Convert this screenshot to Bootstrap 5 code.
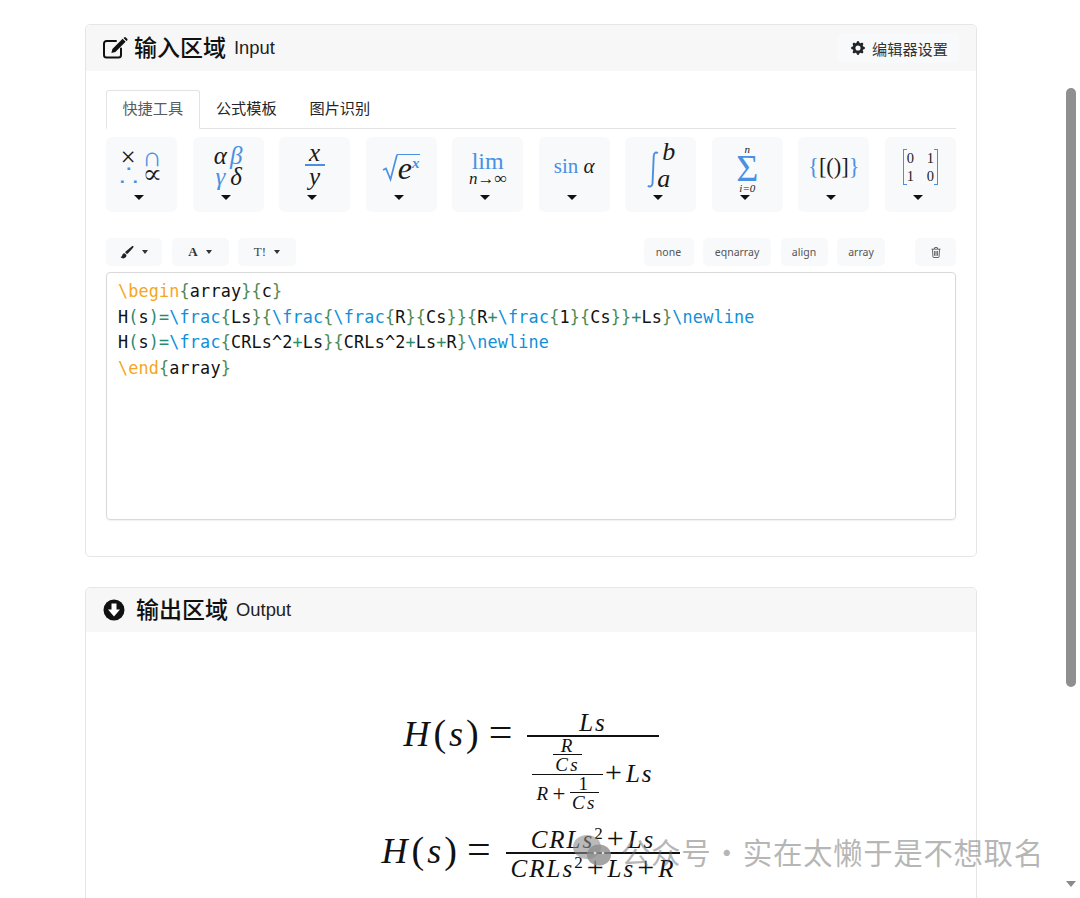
<!DOCTYPE html>
<html lang="zh">
<head>
<meta charset="utf-8">
<title>输入区域</title>
<link href="https://cdn.jsdelivr.net/npm/bootstrap@5.3.0/dist/css/bootstrap.min.css" rel="stylesheet">
<style>
html,body{height:898px;overflow:hidden;background:#fff}
body{font-family:"Liberation Sans","Noto Sans CJK SC",sans-serif;color:#212529}
.shell{height:898px;overflow:hidden}
.page-col{padding:24px 88px 0 85px;min-width:0}
.scroll-col{width:15px;flex:none;background:#fff}
.scroll-thumb{width:10px;height:599px;margin:88px 0 0 1px;background:#8f8f8f;border-radius:5px}
.scroll-arrow{width:0;height:0;border:5px solid transparent;border-top:6px solid #8a8a8a;margin:194px 0 0 1px}
.pane{--bs-card-border-color:#e6e6e6;--bs-card-inner-border-radius:4px;border-radius:5px}
.pane + .pane{margin-top:30px}
.pane-head{height:46px;padding:0 17px;background:#f7f7f7;border:0}
.pane-head-b{height:44px}
.pane-title{font-size:23px;font-weight:500;color:#111;font-family:"Noto Sans CJK SC",sans-serif;line-height:1}
.cn-lift{padding-bottom:4px}
.ic-a{margin-right:-2px}
.ic-b{margin-right:3px}
.gap-8{gap:8px}
.pane-en{font-size:18.4px;font-weight:400;font-family:"Liberation Sans",sans-serif;color:#222}
.set-btn{height:30px;width:122px;padding:0 0 0 3px;gap:7px;font-size:15.2px;color:#333;background:#f8f9fa;border:0;border-radius:5px;font-family:"Noto Sans CJK SC",sans-serif}
.input-body{padding:19px 20px 36px 20px}
.tabs-row{--bs-nav-tabs-border-color:#e3e3e3;--bs-nav-tabs-link-active-border-color:#e3e3e3 #e3e3e3 #fff;--bs-nav-tabs-border-radius:3px;margin-bottom:8px}
.tabs-row .nav-link{font-size:15.2px;padding:5px 15.4px 10px;color:#212529;font-family:"Noto Sans CJK SC",sans-serif;line-height:22px}
.tabs-row .nav-link.active{color:#555c63}
.tool-cell{width:71px;height:75px;padding:0;background:#f7f9fb;border-radius:6px;border:0;color:#1b1b1b;font-family:"Liberation Serif",serif}
.tool-art{height:58px;line-height:1}
.tri{display:block;width:0;height:0;border:5px solid transparent;border-top:5.5px solid #111;border-bottom:0;margin-right:5px}
.blu{color:#4a90e2}
.it{font-style:italic}
.g22{display:grid;grid-template-columns:auto auto;column-gap:0;justify-content:center;font-size:27px;line-height:17px;padding-top:12px}
.g22i{display:grid;grid-template-columns:auto auto;column-gap:3px;justify-content:center;font-size:25px;line-height:21px;font-style:italic;padding-top:8px}
.tfrac{font-size:25px;font-style:italic;line-height:20px;padding-top:6px}
.tfrac-bar{display:block;width:20px;height:2px;background:#4a90e2;margin:1px auto}
.sq-art{padding-top:17px}
.sq-x{font-size:32px;font-style:italic;line-height:27px;display:block}
.sq-sup{font-size:15px;font-style:italic;font-weight:700;vertical-align:11px;line-height:0;color:#4a90e2}
.sq-top{border-top:1.5px solid #4a90e2;padding:0 1px;margin-left:-1px}
.lim-a{font-size:24px;line-height:21px}
.lim-b{font-size:17px;line-height:14px;font-style:italic}
.lim-art{padding-top:14px}
.sin-a{font-size:21px;line-height:59px}
.int-sign{margin-top:14px}
.int-l{font-size:26px;line-height:27px;font-style:italic;text-align:left;padding-top:1px}
.int-b{margin-left:2px}
.int-a{margin-left:-3px}
.sum-art{padding-top:7px}
.sum-s{font-size:11px;line-height:10px;font-style:italic}
.sum-m{font-size:38px;line-height:29px}
.brk{font-size:22.5px;line-height:59px}
.mtx-art{padding-top:12px}
.mtx{display:grid;grid-template-columns:11px 11px;column-gap:9px;border-left:1.5px solid #4a90e2;border-right:1.5px solid #4a90e2;padding:0 1px;font-size:14.5px;line-height:18px;position:relative}
.mtx::before,.mtx::after{content:"";position:absolute;width:3px;top:0;bottom:0;border-top:1.5px solid #4a90e2;border-bottom:1.5px solid #4a90e2}
.mtx::before{left:0}.mtx::after{right:0}
.bar-btn{height:28px;padding:0;background:#f8f9fa;border:0;border-radius:5px;font-size:10.5px;color:#555;font-family:"Noto Sans",sans-serif}
.bar-txt{padding-top:1px}
.mini-tri{display:block;width:0;height:0;border:3.5px solid transparent;border-top:4px solid #333;border-bottom:0}
.w56{width:56px}.w57{width:57px}.w58{width:58px}.w50{width:50px}.w68{width:68px}.w47{width:47px}.w48{width:48px}.w41{width:41px}
.edit-bar{margin-top:26px;margin-bottom:6px}
.gap-a{gap:9.5px}
.spacer-a{width:11px}
.ser-a{font-family:"Liberation Serif",serif;font-size:13px;color:#333}
.ser-t{font-family:"Liberation Serif",serif;font-size:13px;color:#444}
.code-box{height:248px;padding:6px 11px;border:1px solid #d9d9d9;border-radius:4px;box-shadow:0 1px 2px rgba(0,0,0,.06);font-family:"DejaVu Sans Mono",monospace;font-size:16.8px;letter-spacing:.16px;line-height:25.7px;color:#111;white-space:pre;overflow:hidden}
.k-o{color:#f5a623}.k-g{color:#4d8a55}.k-b{color:#0f8fd8}.k-t{color:#2a8a70}
.out-body{padding:78px 0 0;height:400px}
.formula{font-family:"Liberation Serif",serif;color:#111;text-align:center;white-space:nowrap;font-size:25px;line-height:1.2}
.fm-one{height:117px}
.fm-lhs{font-size:36px;margin-right:15px}
.fm-lhs i:first-child{margin-right:4px}
.fm-s{margin:0 3px}
.fm-eq{font-size:42px;margin-left:10px;line-height:1}
.fm-paren{font-size:38px;font-weight:400}
.mfrac{display:inline-flex;flex-direction:column;align-items:center;vertical-align:.58em;line-height:1}
.mfrac>.nu{padding:0 3px;line-height:1}
.mfrac>.de{border-top:2px solid #111;padding:2px 5px 0;line-height:1;align-self:stretch;text-align:center}
.mfrac>.de0{padding-top:0}
.sz25{font-size:25px;font-style:italic;letter-spacing:2px}
.sz19{font-size:19px;font-style:italic;letter-spacing:2.5px}
.mfrac.sz19>.de{border-top-width:1.5px;padding:0 2px;line-height:1}
.mfrac.sz19>.nu{padding:0 2px;line-height:.9}
.mfrac.lift-in>.de{padding:0 4px}
.lift-in{vertical-align:20px}
.lift-nest{vertical-align:.5em}
.lift-sub{vertical-align:.55em}
.sup2{font-size:17px;font-style:normal;vertical-align:.55em;line-height:0}
.up{font-style:normal;font-size:1.2em;line-height:0;margin:0 2px}
.up-n{font-style:normal}
.mark-wrap{position:absolute;left:572px;top:833px;display:flex;align-items:center;gap:9px;pointer-events:none;font-family:"Noto Sans CJK SC",sans-serif;font-size:29.500px;line-height:36px;color:rgba(110,110,110,.5);letter-spacing:.6px;word-spacing:-6.500px;white-space:nowrap}
</style>
</head>
<body>
<div class="shell d-flex">
  <div class="page-col flex-grow-1">

    <div class="card pane">
      <div class="card-header pane-head d-flex align-items-center justify-content-between">
        <div class="d-flex align-items-center gap-8 pane-title">
          <svg class="ic-a" width="25" height="22" viewBox="0 0 25 22" aria-hidden="true"><path d="M18 11.500V18a2.500 2.500 0 0 1-2.500 2.500h-12A2.500 2.500 0 0 1 1 18V6.500A2.500 2.500 0 0 1 3.500 4H13" fill="none" stroke="#111" stroke-width="2" stroke-linecap="round"/><path d="M19.600 1.800l3 3L12.400 15l-4 1 1-4zM20.500 1l.7-.6a1.200 1.200 0 0 1 1.600 0l1.400 1.400a1.200 1.200 0 0 1 0 1.600l-.7.700z" fill="#111"/></svg>
          <span class="cn-lift">输入区域</span><span class="pane-en">Input</span>
        </div>
        <button type="button" class="btn set-btn d-flex align-items-center justify-content-center">
          <svg width="14" height="14" viewBox="0 0 16 16" fill="#212529" aria-hidden="true"><path d="M9.405 1.050c-.413-1.400-2.397-1.400-2.810 0l-.1.340a1.464 1.464 0 0 1-2.105.872l-.31-.17c-1.283-.698-2.686.705-1.987 1.987l.169.311c.446.820.023 1.841-.872 2.105l-.34.1c-1.400.413-1.400 2.397 0 2.810l.34.1a1.464 1.464 0 0 1 .872 2.105l-.17.31c-.698 1.283.705 2.686 1.987 1.987l.311-.169a1.464 1.464 0 0 1 2.105.872l.1.340c.413 1.400 2.397 1.400 2.810 0l.1-.34a1.464 1.464 0 0 1 2.105-.872l.31.17c1.283.698 2.686-.705 1.987-1.987l-.169-.311a1.464 1.464 0 0 1 .872-2.105l.34-.1c1.400-.413 1.400-2.397 0-2.810l-.34-.1a1.464 1.464 0 0 1-.872-2.105l.17-.31c.698-1.283-.705-2.686-1.987-1.987l-.311.169a1.464 1.464 0 0 1-2.105-.872l-.1-.34zM8 10.930a2.929 2.929 0 1 1 0-5.860 2.929 2.929 0 0 1 0 5.858z"/></svg>
          <span>编辑器设置</span>
        </button>
      </div>
      <div class="card-body input-body">
        <ul class="nav nav-tabs tabs-row">
          <li class="nav-item"><a class="nav-link active" href="#">快捷工具</a></li>
          <li class="nav-item"><a class="nav-link" href="#">公式模板</a></li>
          <li class="nav-item"><a class="nav-link" href="#">图片识别</a></li>
        </ul>

        <div class="d-flex justify-content-between">
          <button type="button" class="btn tool-cell d-flex flex-column align-items-center">
            <div class="tool-art"><div class="g22"><span>×</span><span class="blu">∩</span><span class="blu">∴</span><span>∝</span></div></div><span class="tri"></span>
          </button>
          <button type="button" class="btn tool-cell d-flex flex-column align-items-center">
            <div class="tool-art"><div class="g22i"><span>α</span><span class="blu">β</span><span class="blu">γ</span><span>δ</span></div></div><span class="tri"></span>
          </button>
          <button type="button" class="btn tool-cell d-flex flex-column align-items-center">
            <div class="tool-art tfrac"><span class="d-block">x</span><span class="tfrac-bar"></span><span class="d-block">y</span></div><span class="tri"></span>
          </button>
          <button type="button" class="btn tool-cell d-flex flex-column align-items-center">
            <div class="tool-art sq-art d-flex align-items-start">
              <svg width="16" height="28" viewBox="0 0 16 28" aria-hidden="true"><path d="M1 16l3-1.500 4.500 11L15 .8" fill="none" stroke="#4a90e2" stroke-width="1.700"/></svg>
              <span class="sq-top sq-x">e<span class="sq-sup">x</span></span>
            </div><span class="tri"></span>
          </button>
          <button type="button" class="btn tool-cell d-flex flex-column align-items-center">
            <div class="tool-art lim-art"><div class="lim-a blu">lim</div><div class="lim-b">n→∞</div></div><span class="tri"></span>
          </button>
          <button type="button" class="btn tool-cell d-flex flex-column align-items-center">
            <div class="tool-art sin-a"><span class="blu">sin</span> <span class="it">α</span></div><span class="tri"></span>
          </button>
          <button type="button" class="btn tool-cell d-flex flex-column align-items-center">
            <div class="tool-art d-flex align-items-start">
              <svg class="int-sign" width="14" height="38" viewBox="0 0 13 40" aria-hidden="true"><path d="M11.500 2.500c-1.500-1.800-3.800-1.200-4.200 2.500L6 34c-.3 3.300-3.500 4.200-4.800 2.500" fill="none" stroke="#4a90e2" stroke-width="2"/></svg>
              <div class="int-l"><div class="int-b">b</div><div class="int-a">a</div></div>
            </div><span class="tri"></span>
          </button>
          <button type="button" class="btn tool-cell d-flex flex-column align-items-center">
            <div class="tool-art sum-art"><div class="sum-s">n</div><div class="sum-m blu">Σ</div><div class="sum-s">i=0</div></div><span class="tri"></span>
          </button>
          <button type="button" class="btn tool-cell d-flex flex-column align-items-center">
            <div class="tool-art brk"><span class="blu">{</span>[()]<span class="blu">}</span></div><span class="tri"></span>
          </button>
          <button type="button" class="btn tool-cell d-flex flex-column align-items-center">
            <div class="tool-art mtx-art"><div class="mtx"><span>0</span><span>1</span><span>1</span><span>0</span></div></div><span class="tri"></span>
          </button>
        </div>

        <div class="d-flex align-items-center justify-content-between edit-bar">
          <div class="d-flex gap-a">
            <button type="button" class="btn bar-btn w56 d-flex align-items-center justify-content-center gap-2">
              <svg width="14" height="13" viewBox="0 0 14 13" aria-hidden="true"><path d="M13.500.4c-.5-.5-1.300-.4-1.800.1L5.700 5.600c-.3.300-.5.600-.5 1l1.700 1.500c.4 0 .7-.2 1-.5l5.200-5.900c.4-.5.500-1.200.4-1.300zM4.500 7.300C3 7.300 2.300 8.400 2.200 9.600 2.100 10.500 1.300 11 .5 11.100c1 1.200 2.700 1.600 4.100 1 1.500-.6 2.100-2 1.700-3.300z" fill="#222"/></svg>
              <span class="mini-tri"></span>
            </button>
            <button type="button" class="btn bar-btn w57 d-flex align-items-center justify-content-center gap-2">
              <span class="fw-bold ser-a">A</span><span class="mini-tri"></span>
            </button>
            <button type="button" class="btn bar-btn w58 d-flex align-items-center justify-content-center gap-2">
              <span class="ser-t">T!</span><span class="mini-tri"></span>
            </button>
          </div>
          <div class="d-flex gap-a">
            <button type="button" class="btn bar-btn bar-txt w50">none</button>
            <button type="button" class="btn bar-btn bar-txt w68">eqnarray</button>
            <button type="button" class="btn bar-btn bar-txt w47">align</button>
            <button type="button" class="btn bar-btn bar-txt w48">array</button>
            <div class="spacer-a"></div>
            <button type="button" class="btn bar-btn w41 d-flex align-items-center justify-content-center">
              <svg width="10" height="11" viewBox="0 0 10 11" aria-hidden="true"><path d="M.5 2.200h9M3.500 2V1a.5.5 0 0 1 .5-.5h2a.5.5 0 0 1 .5.5v1M1.500 2.300l.4 7.400a.8.8 0 0 0 .8.8h4.600a.8.8 0 0 0 .8-.8l.4-7.400M3.600 4v4.800M5 4v4.800M6.400 4v4.800" fill="none" stroke="#555" stroke-width=".9"/></svg>
            </button>
          </div>
        </div>

        <div class="code-box"><span class="k-o">\begin</span><span class="k-g">{</span>array<span class="k-g">}{</span>c<span class="k-g">}</span>
H<span class="k-t">(</span>s<span class="k-t">)=</span><span class="k-b">\frac</span><span class="k-g">{</span>Ls<span class="k-g">}{</span><span class="k-b">\frac</span><span class="k-g">{</span><span class="k-b">\frac</span><span class="k-g">{</span>R<span class="k-g">}{</span>Cs<span class="k-g">}}{</span>R<span class="k-t">+</span><span class="k-b">\frac</span><span class="k-g">{</span>1<span class="k-g">}{</span>Cs<span class="k-g">}}</span><span class="k-t">+</span>Ls<span class="k-g">}</span><span class="k-b">\newline</span>
H<span class="k-t">(</span>s<span class="k-t">)=</span><span class="k-b">\frac</span><span class="k-g">{</span>CRLs^2<span class="k-t">+</span>Ls<span class="k-g">}{</span>CRLs^2<span class="k-t">+</span>Ls<span class="k-t">+</span>R<span class="k-g">}</span><span class="k-b">\newline</span>
<span class="k-o">\end</span><span class="k-g">{</span>array<span class="k-g">}</span></div>
      </div>
    </div>

    <div class="card pane">
      <div class="card-header pane-head pane-head-b d-flex align-items-center">
        <div class="d-flex align-items-center gap-8 pane-title">
          <svg class="ic-b" width="22" height="22" viewBox="0 0 22 22" aria-hidden="true"><circle cx="11" cy="11" r="10.500" fill="#111"/><path d="M8.500 4.500h5v6h3.500L11 17.500 5 10.500h3.500z" fill="#fff"/></svg>
          <span class="cn-lift">输出区域</span><span class="pane-en">Output</span>
        </div>
      </div>
      <div class="card-body out-body">
        <div class="formula fm-one"><span class="fm-lhs"><i>H</i><span class="fm-paren">(</span><i class="fm-s">s</i><span class="fm-paren">)</span><span class="fm-eq">=</span></span><span class="mfrac sz25"><span class="nu">Ls</span><span class="de de0"><span class="mfrac sz19 lift-in"><span class="nu"><span class="mfrac sz19 lift-nest"><span class="nu">R</span><span class="de">Cs</span></span></span><span class="de"><span>R</span><span class="up">+</span><span class="mfrac sz19 lift-sub"><span class="nu up-n">1</span><span class="de">Cs</span></span></span></span><span class="up">+</span>Ls</span></span></div>
        <div class="formula"><span class="fm-lhs"><i>H</i><span class="fm-paren">(</span><i class="fm-s">s</i><span class="fm-paren">)</span><span class="fm-eq">=</span></span><span class="mfrac sz25"><span class="nu">CRLs<span class="sup2">2</span><span class="up">+</span>Ls</span><span class="de">CRLs<span class="sup2">2</span><span class="up">+</span>Ls<span class="up">+</span>R</span></span></div>
      </div>
    </div>
  </div>

  <div class="scroll-col">
    <div class="scroll-thumb"></div>
    <div class="scroll-arrow"></div>
  </div>
</div>

<div class="mark-wrap">
  <svg width="40" height="34" viewBox="0 0 40 34" aria-hidden="true"><ellipse cx="15" cy="13" rx="14" ry="12" fill="#8c8c8c" fill-opacity=".6"/><ellipse cx="27" cy="21" rx="12" ry="10.500" fill="#8c8c8c" fill-opacity=".8"/><circle cx="23" cy="19" r="1.300" fill="#ddd"/><circle cx="31" cy="19" r="1.300" fill="#ddd"/></svg>
  <span>公众号 · 实在太懒于是不想取名</span>
</div>
</body>
</html>
